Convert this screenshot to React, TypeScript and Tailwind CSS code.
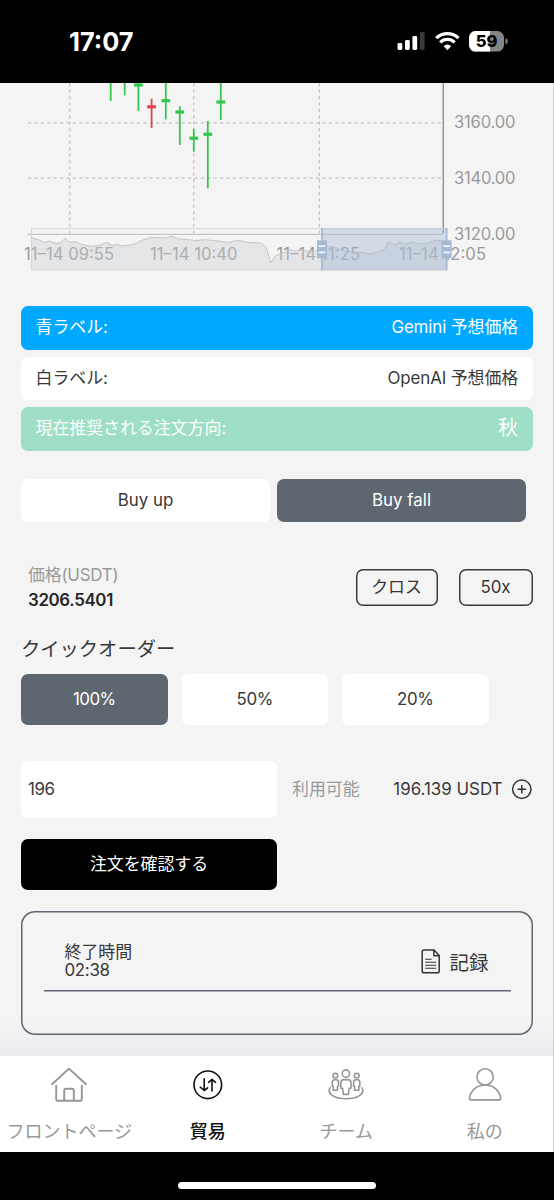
import React from "react";

const grid = "#c3c3c5";
const green = "#34c74f";
const red = "#e0454f";

type Candle = { x: number; high: number; low: number; body: number; color: string };

const candles: Candle[] = [
  { x: 110.7, high: 80, low: 101, body: 70, color: green },
  { x: 124.7, high: 80, low: 95.3, body: 70, color: green },
  { x: 138.4, high: 80, low: 111, body: 85, color: green },
  { x: 151.6, high: 98.7, low: 128, body: 106.8, color: red },
  { x: 165.8, high: 80, low: 119.5, body: 100.7, color: green },
  { x: 179.8, high: 106.3, low: 145, body: 112, color: green },
  { x: 193.8, high: 129, low: 151.7, body: 138.2, color: green },
  { x: 207.8, high: 121, low: 188.3, body: 134.3, color: green },
  { x: 220.8, high: 80, low: 120, body: 102, color: green },
];

const overview =
  "31.5,238 38,239.5 44,242.5 49,241 56,243.5 60,243 65,238.5 69,242 76,242 82,244.5 92,246.5 100,245 107,242.5 112,245.5 117,244.5 121,246 131,245 137,243 141,240.5 151,237.5 165,238 172,236 178,239 186,239.3 195,240.5 205,239.8 215,240.5 228,242.5 238,240.3 248,242.5 261,243 266,247 271,263 275,256 280,254 286,252 291,249.5 295,251 303,250 311,252 320,250 328,246.5 334,247 344,251 354,252 361,252.5 371,254 379,251 384,250 388,242 395,245 400,242 405,244 412,242 420,244 428,243 436,240 446.5,242";

function Chart() {
  return (
    <svg className="block shrink-0" width="554" height="223" viewBox="0 83 554 223">
      <g stroke={grid} strokeWidth="1.2" strokeDasharray="3.4 3">
        <path d="M28 122.9H443M28 178.1H443" />
        <path d="M69.7 83V234M193.8 83V234M319.3 83V234" />
      </g>
      {candles.map((c) => (
        <g key={c.x} fill={c.color}>
          <rect x={c.x - 0.9} y={c.high} width="1.8" height={c.low - c.high} />
          <rect x={c.x - 4.4} y={c.body - 1.6} width="8.8" height="3.2" />
        </g>
      ))}
      <path d="M27.5 234.4H443" stroke="#c4c4c6" strokeWidth="1.2" />
      <path d="M443.3 83V233.5" stroke="#929294" strokeWidth="1.4" />
      <g fontFamily="Inter, sans-serif" fontSize="16.6" fill="#9a9a9c">
        <text x="454" y="128.2" textLength="61.5">3160.00</text>
        <text x="454" y="184.2" textLength="61.5">3140.00</text>
        <text x="454" y="239.9" textLength="61.5">3120.00</text>
        <text x="24" y="260" textLength="90">11–14 09:55</text>
        <text x="150" y="260" textLength="87.5">11–14 10:40</text>
        <text x="276.5" y="260" textLength="83.5">11–14 11:25</text>
        <text x="399" y="260" textLength="87">11–14 12:05</text>
      </g>
      <polygon points={`31.5,270 ${overview} 446.5,270`} fill="#c8ccd2" fillOpacity="0.38" />
      <polyline points={overview} fill="none" stroke="#c3c5c8" strokeWidth="1" />
      <rect x="31.5" y="228.7" width="415" height="41.3" fill="none" stroke="#d5d6d9" strokeWidth="1.1" />
      <rect x="321.7" y="228.2" width="125" height="42" fill="#a2b7d2" fillOpacity="0.42" />
      {[322, 446.6].map((x) => (
        <g key={x}>
          <rect x={x - 0.9} y="228" width="1.8" height="42.3" fill="#a6bad6" />
          <rect x={x - 5} y="240.3" width="10" height="18" fill="#a6bad6" />
          <path d={`M${x - 3.2} 246.2h6.4M${x - 3.2} 252.4h6.4`} stroke="#f5f8fc" strokeWidth="1.8" />
        </g>
      ))}
    </svg>
  );
}

function StatusBar() {
  return (
    <header className="flex h-[83px] w-full shrink-0 items-start bg-black pl-[69px] pt-[24px] text-white">
      <span className="w-[328px] pt-[2px] text-[25.3px] leading-[31px] font-bold">17:07</span>
      <svg width="28" height="31" viewBox="0 0 28 31" fill="#fff">
        <rect x="0.5" y="19" width="4.8" height="7" rx="1.4" />
        <rect x="8" y="16" width="4.8" height="10" rx="1.4" />
        <rect x="15.4" y="12" width="4.8" height="14" rx="1.4" />
        <rect x="22.8" y="8" width="4.8" height="18" rx="1.4" fill="#3a3a3a" />
      </svg>
      <svg className="ml-[9.5px]" width="25" height="31" viewBox="0 0 25 31" fill="none" stroke="#fff" strokeWidth="3.3">
        <path d="M1.3 14.2a15.8 15.8 0 0 1 22.2 0" />
        <path d="M5.2 18.4a10.2 10.2 0 0 1 14.4 0" />
        <path d="M8.6 22.1a5.8 5.8 0 0 1 7.6 0L12.4 26.2z" fill="#fff" stroke="none" />
      </svg>
      <svg className="ml-[9.5px]" width="40" height="31" viewBox="0 0 40 31">
        <defs>
          <clipPath id="charge"><rect x="0" y="6" width="21" height="22" /></clipPath>
        </defs>
        <rect x="0" y="7" width="35" height="20.6" rx="6.5" fill="#858585" />
        <rect x="0" y="7" width="35" height="20.6" rx="6.5" fill="#fff" clipPath="url(#charge)" />
        <path d="M36.5 14q2.3 1 2.3 3.3t-2.3 3.3z" fill="#858585" />
        <text x="17.5" y="23.2" textAnchor="middle" fontFamily="Inter, sans-serif" fontWeight="800" fontSize="16.5" fill="#000">59</text>
      </svg>
    </header>
  );
}

function LabelRow({ tone, left, right, big }: { tone: string; left: string; right: string; big?: boolean }) {
  return (
    <div className={`flex h-[43.5px] items-center justify-between rounded-[7px] px-[14.5px] pb-px ${tone}`}>
      <span>{left}</span>
      <span className={big ? "text-[20px]" : "tracking-[-0.1px]"}>{right}</span>
    </div>
  );
}

const HomeIcon = () => (
  <svg width="38" height="38" viewBox="0 0 38 38" fill="none" stroke="#969696" strokeWidth="1.9" strokeLinecap="round" strokeLinejoin="round">
    <path d="M2 18.2 19 2.6l17 15.6M6.2 19.8V33q0 1.8 1.8 1.8h22q1.8 0 1.8-1.8V19.8M14.2 34.5V24.5q0-1.8 1.8-1.8h6q1.8 0 1.8 1.8v10" />
  </svg>
);

const TradeIcon = () => (
  <svg width="38" height="38" viewBox="0 0 38 38" fill="none" stroke="#111" strokeWidth="1.6" strokeLinecap="round" strokeLinejoin="round">
    <circle cx="18.8" cy="18.8" r="13.8" />
    <path d="M15.2 12.8v11.6M11.3 21.2l3.9 3.3 3.4-2.7M23 25V13.5M19.6 16.3l3.4-3 3.6 3" />
  </svg>
);

const TeamIcon = () => (
  <svg width="38" height="38" viewBox="0 0 38 38" fill="none" stroke="#969696" strokeWidth="1.6" strokeLinecap="round" strokeLinejoin="round">
    <circle cx="18.9" cy="7.6" r="3.7" />
    <circle cx="8.4" cy="9.6" r="2.4" />
    <circle cx="29.7" cy="9.6" r="2.4" />
    <path d="M17 13.6h3.8q3.2 0 3.2 3.2v5.4h-1.8l-.8 6.2h-5l-.8-6.2H13.8v-5.4q0-3.2 3.2-3.2Z" />
    <path d="M7.5 13.8h1.8q2.2 0 2.2 2.4v4h-1v4H6.3v-4h-1v-4q0-2.4 2.2-2.4ZM28.8 13.8h1.8q2.2 0 2.2 2.4v4h-1v4h-4.2v-4h-1v-4q0-2.4 2.2-2.4Z" />
    <path d="M3 21.8C-.5 28 8 32.8 19 32.8s19.5-4.8 16-11" />
  </svg>
);

const UserIcon = () => (
  <svg width="38" height="38" viewBox="0 0 38 38" fill="none" stroke="#969696" strokeWidth="1.6" strokeLinecap="round" strokeLinejoin="round">
    <circle cx="19.1" cy="10.9" r="8.1" />
    <path d="M19.1 19C10.5 19 4.5 25 3.5 32.3q-.2 1.6 1.4 1.6h28.4q1.6 0 1.4-1.6C33.7 25 27.7 19 19.1 19Z" />
  </svg>
);

const tabs = [
  { label: "フロントページ", icon: <HomeIcon />, active: false },
  { label: "貿易", icon: <TradeIcon />, active: true },
  { label: "チーム", icon: <TeamIcon />, active: false },
  { label: "私の", icon: <UserIcon />, active: false },
];

export default function App() {
  return (
    <div className="flex h-[1200px] w-[554px] flex-col overflow-hidden bg-[#f4f4f4] font-['Inter','Noto_Sans_CJK_JP',sans-serif] text-[16.9px] leading-[20px] text-[#383838]">
      <StatusBar />
      <main className="flex h-[973px] shrink-0 flex-col border-r border-[#d0d0d2] bg-linear-to-b from-[#f4f4f4] from-96% to-[#ebecf0]">
        <Chart />
        <section className="ml-[21px] flex w-[511.5px] flex-col gap-[7px]">
          <LabelRow tone="bg-[#00a8ff] text-white" left="青ラベル:" right="Gemini 予想価格" />
          <LabelRow tone="bg-white" left="白ラベル:" right="OpenAI 予想価格" />
          <LabelRow tone="bg-[#9ddec4] text-white" left="現在推奨される注文方向:" right="秋" big />
        </section>
        <section className="mt-[28px] ml-[21px] flex gap-[7px]">
          <button className="h-[43.5px] w-[249px] rounded-[7px] bg-white pb-px">Buy up</button>
          <button className="h-[43.5px] w-[249px] rounded-[7px] bg-[#5e6670] pb-px text-white">Buy fall</button>
        </section>
        <section className="mt-[41.5px] ml-[28px] flex h-[50px] w-[504.5px] items-start">
          <div className="flex flex-1 flex-col">
            <span className="leading-[22px] tracking-[-0.2px] text-[#999]">価格(USDT)</span>
            <span className="mt-[4px] font-semibold tracking-[-0.35px] text-[#262626]">3206.5401</span>
          </div>
          <button className="mt-[5px] h-[37px] w-[82px] rounded-[7px] pb-px inset-ring-[1.5px] inset-ring-[#3a3a3a]">クロス</button>
          <button className="mt-[5px] ml-[21px] h-[37px] w-[74px] rounded-[7px] pb-px inset-ring-[1.5px] inset-ring-[#3a3a3a]">50x</button>
        </section>
        <h2 className="mt-[23px] ml-[21px] h-[24px] text-[19.3px] leading-[24px]">クイックオーダー</h2>
        <section className="mt-[13.5px] ml-[21px] flex gap-[14px]">
          <button className="h-[51px] w-[146.5px] rounded-[7px] bg-[#5e6670] pb-px tracking-[-0.6px] text-white">100%</button>
          <button className="h-[51px] w-[146.5px] rounded-[7px] bg-white pb-px tracking-[-0.3px]">50%</button>
          <button className="h-[51px] w-[146.5px] rounded-[7px] bg-white pb-px tracking-[-0.3px]">20%</button>
        </section>
        <section className="mt-[35.5px] ml-[21px] flex h-[57.5px] w-[511.5px] items-center">
          <div className="flex h-full w-[256px] items-center rounded-[7px] bg-white pl-[7px] tracking-[-0.4px]">196</div>
          <span className="ml-[15px] pb-px text-[#999]">利用可能</span>
          <span className="ml-auto pb-px">196.139 USDT</span>
          <svg className="ml-[8px]" width="22" height="22" viewBox="0 0 22 22" fill="none" stroke="#333" strokeWidth="1.5">
            <circle cx="10.8" cy="11.3" r="9.2" />
            <path d="M10.8 7v8.6M6.5 11.3h8.6" />
          </svg>
        </section>
        <button className="mt-[21px] ml-[21px] h-[50.5px] w-[256px] shrink-0 rounded-[7px] bg-black pb-px text-white">注文を確認する</button>
        <section className="mt-[21px] ml-[21px] h-[124px] w-[512px] shrink-0 rounded-[14px] px-[22.5px] inset-ring-[1.5px] inset-ring-[#5f6672]">
          <div className="flex h-[79px] items-center pr-[22px] pl-[21px]">
            <div className="flex flex-1 flex-col pt-[22.5px] leading-[18.5px]">
              <span>終了時間</span>
              <span className="tracking-[-0.3px]">02:38</span>
            </div>
            <svg className="mt-[22.5px]" width="20" height="25" viewBox="0 0 20 25" fill="none" stroke="#333" strokeWidth="1.5" strokeLinejoin="round">
              <path d="M3 1h10l5.2 5.500V22q0 1.800-1.800 1.800H3Q1.200 23.800 1.200 22V2.800Q1.200 1 3 1ZM12.800 1.200v5.500H18" />
              <path d="M4.200 10.200h6.500M4.200 13.200h11M4.200 16.200h11M4.200 19.200h11" strokeWidth="1.1" />
            </svg>
            <span className="mt-[25px] ml-[8px] text-[19.5px] leading-[24px]">記録</span>
          </div>
          <svg className="block" width="467" height="2" viewBox="0 0 467 2"><path d="M0 .75h467" stroke="#5f6672" strokeWidth="1.5" /></svg>
        </section>
      </main>
      <nav className="flex h-[96px] shrink-0 border-r border-[#d0d0d2] bg-white">
        {tabs.map((t) => (
          <div key={t.label} className={`flex w-[138.5px] shrink-0 flex-col items-center pt-[9.5px] text-[18px] whitespace-nowrap ${t.active ? "text-[#111] font-medium" : "text-[#999]"}`}>
            {t.icon}
            <span className="mt-[16px] leading-[24px]">{t.label}</span>
          </div>
        ))}
      </nav>
      <footer className="flex h-12 shrink-0 justify-center bg-black pt-[30px]">
        <div className="h-[7px] w-[198px] rounded-full bg-white" />
      </footer>
    </div>
  );
}
